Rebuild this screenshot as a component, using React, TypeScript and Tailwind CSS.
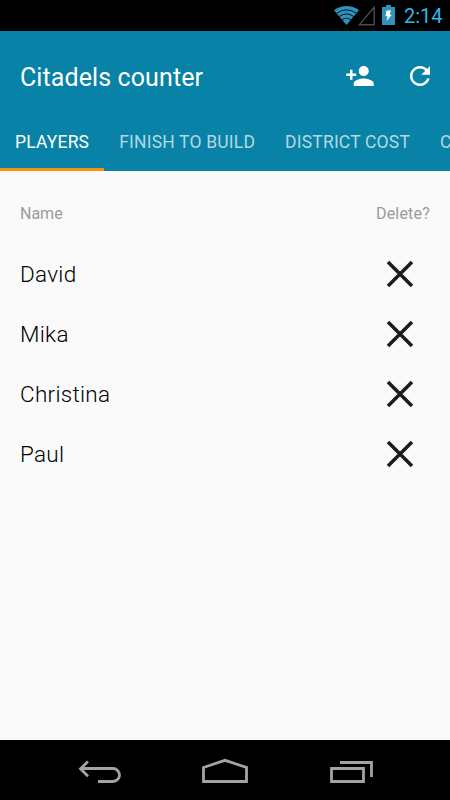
const TABS = ['PLAYERS', 'FINISH TO BUILD', 'DISTRICT COST', 'C']

const PLAYERS = ['David', 'Mika', 'Christina', 'Paul']

function StatusBar() {
  return (
    <div className="flex h-[31px] shrink-0 items-center bg-black pl-[333px]">
      <svg width="27" height="31" viewBox="0 0 27 31" className="shrink-0" fill="none">
        <path d="M1 10.2Q13.5 1.8 26 10.2L13.5 25Z" fill="#2f92bb" />
        <g stroke="#04121a" strokeWidth="1">
          <path d="M3.4 13.3Q13.5 6.4 23.6 13.3" />
          <path d="M6.1 16.6Q13.5 11.3 20.9 16.6" />
          <path d="M8.9 19.9Q13.5 16.6 18.1 19.9" />
        </g>
      </svg>
      <svg width="17" height="31" viewBox="0 0 17 31" className="-ml-[2px] mr-[7px] shrink-0" fill="none">
        <path d="M1.2 24.8H16.2V7.2Z" stroke="#4c4c4c" strokeWidth="1.4" />
      </svg>
      <svg width="13" height="31" viewBox="0 0 13 31" className="mr-[9px] shrink-0">
        <path d="M0 7h4V5h5v2h4v18H0z" fill="#2f92bb" />
        <path d="M4.5 10.5H9L7.8 14.2L9.6 15L4.6 21L5.6 16.8L3.5 16Z" fill="#fff" />
      </svg>
      <span className="pt-[2px] text-[20px] leading-[29px] text-[#33b5e5]">2:14</span>
    </div>
  )
}

function AppBar() {
  return (
    <header className="flex h-[140px] shrink-0 flex-col bg-[#0882a6] text-white">
      <div className="flex h-[90px] items-center pl-5 pr-[15px]">
        <h1 className="flex-1 pt-1 text-[25px] leading-[30px] tracking-[0.1px]">Citadels counter</h1>
        <button type="button" aria-label="Add player" className="mr-[30px]">
          <svg width="30" height="30" viewBox="0 0 24 24" fill="currentColor">
            <path d="M15 12c2.21 0 4-1.79 4-4s-1.79-4-4-4-4 1.79-4 4 1.79 4 4 4zm-9-2V7H4v3H1v2h3v3h2v-3h3v-2H6zm9 4c-2.67 0-8 1.34-8 4v2h16v-2c0-2.66-5.33-4-8-4z" />
          </svg>
        </button>
        <button type="button" aria-label="Reset">
          <svg width="30" height="30" viewBox="0 0 24 24" fill="currentColor">
            <path d="M17.65 6.35C16.2 4.9 14.21 4 12 4c-4.42 0-7.99 3.58-7.99 8s3.57 8 7.99 8c3.73 0 6.84-2.55 7.73-6h-2.08c-.82 2.33-3.04 4-5.65 4-3.31 0-6-2.69-6-6s2.69-6 6-6c1.66 0 3.14.69 4.22 1.78L13 11h7V4l-2.35 2.35z" />
          </svg>
        </button>
      </div>
      <nav className="flex h-[50px] overflow-hidden text-[17.5px] tracking-[0.19px] whitespace-nowrap">
        {TABS.map((tab, i) => (
          <button
            key={tab}
            type="button"
            className={
              i === 0
                ? 'shrink-0 border-b-[3px] border-[#f9930f] px-[15px] pt-px pb-[6px]'
                : 'shrink-0 border-b-[3px] border-transparent px-[15px] pt-px pb-[6px] text-white/70'
            }
          >
            {tab}
          </button>
        ))}
      </nav>
    </header>
  )
}

function PlayerRow({ name }: { name: string }) {
  return (
    <li className="flex h-[60px] items-center justify-between pl-5 pr-[35px]">
      <span className="pt-[2px] text-[22.5px] font-light tracking-[0.28px] text-black">{name}</span>
      <button type="button" aria-label={`Delete ${name}`}>
        <svg width="30" height="30" viewBox="0 0 30 30" fill="none" stroke="#1b1b1b" strokeWidth="3.5">
          <path d="M3 3L27 27M27 3L3 27" />
        </svg>
      </button>
    </li>
  )
}

function NavBar() {
  return (
    <footer className="flex h-[60px] shrink-0 items-center justify-between bg-black px-[77px]">
      <svg width="46" height="60" viewBox="77 740 46 60" fill="none" stroke="#a3a3a3" strokeWidth="2.8">
        <path d="M88 761.5L80.5 768.8L88 776.2M81 768.5H113A6.5 6.5 0 0 1 113 781.5H98" />
      </svg>
      <svg width="46" height="60" viewBox="202 740 46 60" fill="none" stroke="#a3a3a3" strokeWidth="2.8">
        <path d="M203.5 767.5L225 760.3L246.5 767.5V781.5H203.5Z" />
      </svg>
      <svg width="46" height="60" viewBox="327 740 46 60" fill="none" stroke="#a3a3a3" strokeWidth="2.8">
        <path d="M331.5 768.5H363.5V781.5H331.5ZM340 762.5H371.5V777" />
      </svg>
    </footer>
  )
}

export default function App() {
  return (
    <div className="flex h-[800px] w-[450px] flex-col overflow-hidden bg-[#fafafa] font-[Roboto,sans-serif]">
      <StatusBar />
      <AppBar />
      <main className="flex-1 pt-[31px]">
        <div className="flex h-[24px] items-center justify-between px-5 text-[16px] text-[#9a9a9a]">
          <span>Name</span>
          <span className="tracking-[0.2px]">Delete?</span>
        </div>
        <ul className="pt-[18px]">
          {PLAYERS.map((name) => (
            <PlayerRow key={name} name={name} />
          ))}
        </ul>
      </main>
      <NavBar />
    </div>
  )
}
